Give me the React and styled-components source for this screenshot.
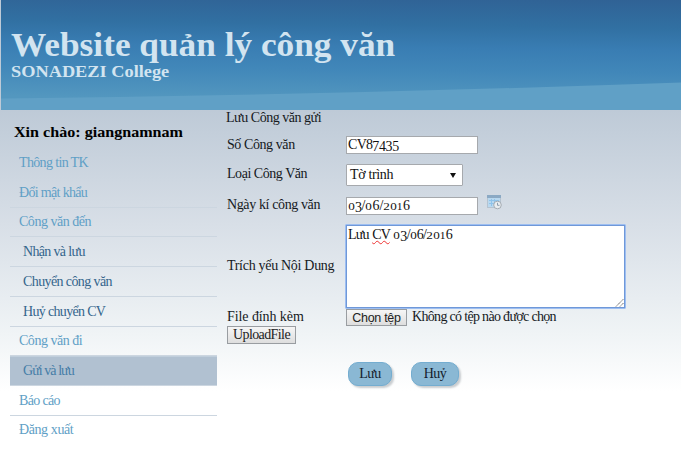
import React from "react";
import styled, { createGlobalStyle, css } from "styled-components";

const Global = createGlobalStyle`
  * { box-sizing: border-box; }
  html, body { margin: 0; padding: 0; }
  body {
    width: 681px; height: 451px; overflow: hidden; background: #fff;
    font-family: "Liberation Serif", serif; font-size: 14px; color: #15191d;
  }
`;
const Page = styled.div`
  width: 681px; height: 451px; padding-left: 1px;
  background: linear-gradient(#becad7 0, #becad7 110px, #d8dfe7 225px, #f0f4f6 335px, #fff 391px);
`;
const Header = styled.header`
  position: relative; height: 110px; padding: 28px 0 0 10px; color: #d2e4f0;
  background: linear-gradient(180.7deg, #306295 0, #3170a2 24%, #397db3 43%, #4187b9 62%, #5397bf 88%);
`;
const Swoosh = styled.svg`
  position: absolute; left: 0; top: 0; width: 680px; height: 110px;
`;
const SiteTitle = styled.h1`
  position: relative; margin: 0; font-size: 33px; line-height: 34px; font-weight: bold;
  width: fit-content; white-space: nowrap; transform: scaleX(1.069); transform-origin: left;
`;
const SiteSub = styled.div`
  position: relative; font-size: 16.5px; line-height: 20px; font-weight: bold;
  transform: scaleX(1.11); transform-origin: left; width: 200px;
`;
const Body = styled.main`display: grid; grid-template-columns: 216px 1fr;`;
const Sidebar = styled.nav`padding: 13px 0 0 9px;`;
const Greeting = styled.div`
  height: 25px; margin-left: 4px; font-size: 15px; line-height: 19px; font-weight: bold; color: #000;
  width: 180px; transform: scaleX(1.073); transform-origin: left;
`;
const MenuItem = styled.div`
  width: 207px; height: 29.75px; line-height: ${p => p.$lh || 28}px; white-space: nowrap;
  padding-left: ${p => (p.$sub ? 13 : 9)}px;
  color: ${p => (p.$sub ? "#34658c" : "#5f9fc6")};
  border-bottom: 1px solid ${p => (p.$noLine ? "transparent" : "#ccd6e0")};
  letter-spacing: ${p => p.$ls || 0}px;
  ${p => p.$active && css`
    background: #b1c1d1; color: #457da7; box-shadow: inset 0 1px #c1cfdc;
  `}
`;
const Form = styled.form`
  padding-left: 10px; display: grid; grid-template-columns: 119px 1fr;
  grid-template-rows: 18px 34px 26px 36px 85px 17px 18px 17px 26px;
`;
const Label = styled.label`
  align-self: center; white-space: nowrap; line-height: 16px; margin-top: ${p => p.$mt || 0}px;
  letter-spacing: ${p => p.$ls || 0}px;
`;
const Heading = styled(Label)`grid-column: 1 / 3; margin-left: -1px;`;
const Cell = styled.div`grid-column: 2; display: flex; align-items: center;`;
const TextField = styled.div`
  width: 132px; height: 18px; border: 1px solid #a6a9ad; background: #fff; color: #111;
  padding-left: 1px; line-height: 16px; letter-spacing: ${p => p.$ls || 0}px; white-space: nowrap;
`;
const SelectBox = styled.div`
  width: 117px; height: 22px; border: 1px solid #a6a9ad; border-radius: 1px; background: #fff; color: #111;
  display: flex; align-items: center; justify-content: space-between; padding: 0 6px 0 3px;
  letter-spacing: -0.35px;
`;
const Arrow = styled.i`
  border: 3px solid transparent; border-top: 5px solid #111; border-bottom: 0;
`;
const Calendar = styled.svg`width: 15px; height: 15px; margin: -7px 0 0 9px;`;
const TextArea = styled.div`
  position: relative; width: 281px; height: 85px; margin-left: -1px; background: #fff; color: #111;
  border: 1px solid #9dbef1; box-shadow: inset 0 0 0 1px #6f98d8; border-radius: 1px;
  padding: 1px 0 0 2px; line-height: 17px; letter-spacing: -0.8px; word-spacing: 0.7px;
`;
const Misspelled = styled.span`
  text-decoration: underline wavy #e33 1px; text-decoration-skip-ink: none; text-underline-offset: 1px;
`;
const Grip = styled.svg`position: absolute; right: 1px; bottom: 1px; width: 9px; height: 9px;`;
const NativeButton = styled.button`
  margin: 0; padding: 0; width: ${p => p.$w}px; height: ${p => p.$h}px; color: #222;
  font: ${p => (p.$sans ? '12.5px "Liberation Sans", sans-serif' : '14px "Liberation Serif", serif')};
  line-height: 14px; letter-spacing: ${p => p.$ls || 0}px; white-space: nowrap;
  border: 1px solid #999da1; background: linear-gradient(#f6f6f6, #dedede);
`;
const FileStatus = styled.span`
  margin: -1px 0 0 5px; letter-spacing: ${p => p.$ls || 0}px; white-space: nowrap;
`;
const Actions = styled(Cell)`grid-row: 9; gap: 19px; padding: 0 0 1px 2px;`;
const Pill = styled.button`
  width: ${p => p.$w}px; height: 24px; padding: 0; border: 1px solid #74add0; border-radius: 10px;
  background: #8ab8d4; color: #14202c; font: 14px "Liberation Serif", serif; letter-spacing: -0.6px;
  box-shadow: 2px 2px 2px #c9cdd0;
`;
const SmallDigit = styled.span`
  display: inline-block; font-size: 10.5px; line-height: 1; width: ${p => (p.$narrow ? 5.5 : 7)}px;
  text-align: center; letter-spacing: 0; transform: scaleX(${p => (p.$narrow ? 1.1 : 1.25)});
`;
const LowDigit = styled.span`
  display: inline-block; width: 6.6px; letter-spacing: 0; transform: translateY(2px);
`;

function Numerals({ children }) {
  return [...children].map((c, i) => {
    if ("012".includes(c)) return <SmallDigit key={i} $narrow={c === "1"}>{c}</SmallDigit>;
    if ("34579".includes(c)) return <LowDigit key={i}>{c}</LowDigit>;
    return <React.Fragment key={i}>{c}</React.Fragment>;
  });
}

const menu = [
  { t: "Thông tin TK", noLine: true, ls: -0.65, lh: 29 },
  { t: "Đổi mật khẩu", ls: -0.67, lh: 29 },
  { t: "Công văn đến", ls: -0.47 },
  { t: "Nhận và lưu", sub: true, ls: -0.66, lh: 30 },
  { t: "Chuyển công văn", sub: true, ls: -0.6, lh: 30 },
  { t: "Huỷ chuyển CV", sub: true, ls: -0.67, lh: 29 },
  { t: "Công văn đi", ls: -0.48 },
  { t: "Gửi và lưu", sub: true, active: true, ls: -0.95, lh: 30 },
  { t: "Báo cáo", ls: -0.65, lh: 29 },
  { t: "Đăng xuất", noLine: true, ls: -0.4 },
];

export default function App() {
  return (
    <Page>
      <Global />
      <Header>
        <Swoosh viewBox="0 0 680 110" preserveAspectRatio="none">
          <path d="M0 98.5 Q330 95 680 82.5 V110 H0Z" fill="#60a0c6" />
        </Swoosh>
        <SiteTitle>Website quản lý công văn</SiteTitle>
        <SiteSub>SONADEZI College</SiteSub>
      </Header>
      <Body>
        <Sidebar>
          <Greeting>Xin chào: giangnamnam</Greeting>
          {menu.map(m => (
            <MenuItem key={m.t} $sub={m.sub} $active={m.active} $noLine={m.noLine} $ls={m.ls} $lh={m.lh}>{m.t}</MenuItem>
          ))}
        </Sidebar>
        <Form>
          <Heading as="div" $ls={-0.47} $mt={-2}>Lưu Công văn gửi</Heading>
          <Label $ls={-0.42}>Số Công văn</Label>
          <Cell><TextField $ls={-0.7}>CV8<Numerals>7435</Numerals></TextField></Cell>
          <Label $ls={-0.46} $mt={-2}>Loại Công Văn</Label>
          <Cell><SelectBox>Tờ trình<Arrow /></SelectBox></Cell>
          <Label $ls={-0.38} $mt={-2}>Ngày kí công văn</Label>
          <Cell>
            <TextField><Numerals>03/06/2016</Numerals></TextField>
            <Calendar viewBox="0 0 15 15">
              <rect x="0.5" y="0.5" width="13" height="12" fill="#b9d8ef" stroke="#b5c3d0" />
              <rect x="0" y="0" width="14" height="3" fill="#8ba9c4" />
              <path d="M2 5.5H12M2 8.5H9M4.5 4V11M7.5 4V11" stroke="#8fc3ea" />
              <circle cx="10.5" cy="10" r="3.8" fill="#e9edf0" stroke="#a4abb2" />
              <path d="M10.5 7.8V10.3H12.5" fill="none" stroke="#8c9eb0" />
            </Calendar>
          </Cell>
          <Label $ls={-0.3} $mt={-2}>Trích yếu Nội Dung</Label>
          <TextArea>
            Lưu <Misspelled>CV</Misspelled> <Numerals>03/06/2016</Numerals>
            <Grip viewBox="0 0 9 9"><path d="M1 8.5L8.5 1M5 8.5L8.5 5" stroke="#555" strokeDasharray="1.2 .6" /></Grip>
          </TextArea>
          <Label $ls={-0.08} $mt={-2}>File đính kèm</Label>
          <Cell>
            <NativeButton type="button" $w={61} $h={17} $ls={-0.3} $sans>Chọn tệp</NativeButton>
            <FileStatus $ls={-0.68}>Không có tệp nào được chọn</FileStatus>
          </Cell>
          <NativeButton type="button" $w={69} $h={18} $ls={-0.6}>UploadFile</NativeButton>
          <Actions>
            <Pill type="button" $w={44}>Lưu</Pill>
            <Pill type="button" $w={48}>Huỷ</Pill>
          </Actions>
        </Form>
      </Body>
    </Page>
  );
}
